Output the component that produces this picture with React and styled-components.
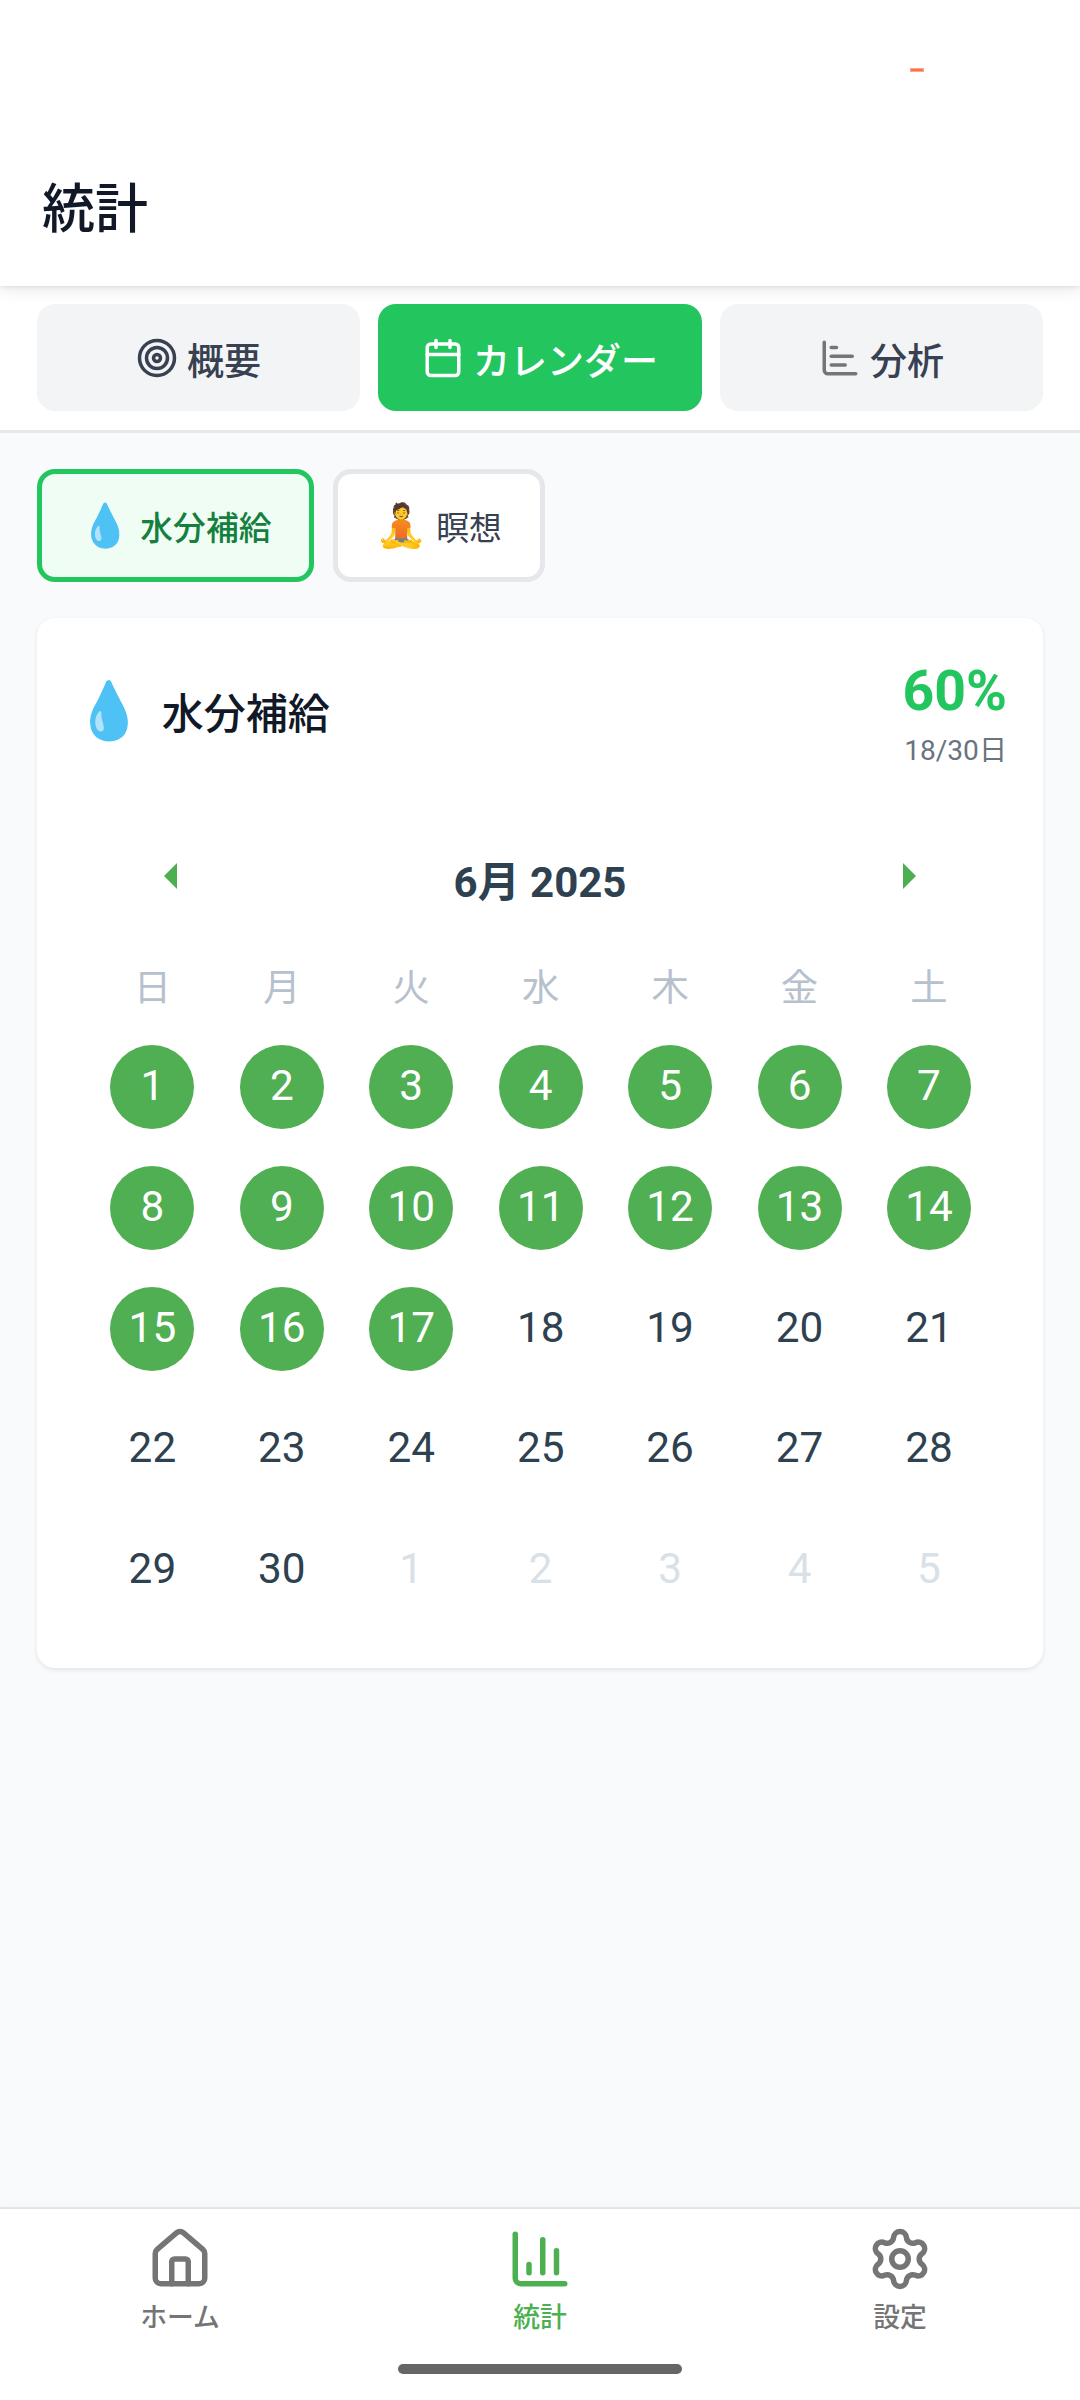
import React from "react";
import styled, { createGlobalStyle } from "styled-components";
import { Target, Calendar, ChartBar, House, ChartColumn, Settings } from "lucide-react";

const GlobalStyle = createGlobalStyle`
  *, *::before, *::after { box-sizing: border-box; }
  body {
    margin: 0;
    background: #f9fafb;
    font-family: Roboto, "Noto Sans CJK JP", sans-serif;
  }
  button { font: inherit; border: 0; margin: 0; padding: 0; background: none; }
`;

const Screen = styled.div`
  width: 1080px;
  height: 2400px;
  display: flex;
  flex-direction: column;
  overflow: hidden;
  background: #f9fafc;
`;

const Header = styled.header`
  position: relative;
  z-index: 1;
  flex: none;
  height: 286px;
  padding: 0 42px;
  display: flex;
  flex-direction: column;
  background: #fff;
  box-shadow: 0 4px 16px rgba(0, 0, 0, 0.09), 0 1px 4px rgba(0, 0, 0, 0.09);
`;

const StatusBar = styled.div`
  height: 132px;
  padding: 68px 114px 0 0;
  display: flex;
  justify-content: flex-end;
`;

const StatusMark = styled.span`
  width: 14px;
  height: 4px;
  background: #ff7043;
  border: 1px solid #ffa588;
`;

const PageTitle = styled.h1`
  margin: 0;
  height: 154px;
  line-height: 156px;
  font-size: 53px;
  font-weight: 500;
  color: #111827;
`;

const TabBar = styled.nav`
  flex: none;
  height: 147px;
  padding: 18px 36.8px 0;
  display: flex;
  align-items: flex-start;
  gap: 18.4px;
  background: #fff;
  border-bottom: 3px solid #e5e7eb;
`;

const Tab = styled.button`
  flex: 1;
  height: 107px;
  display: flex;
  align-items: center;
  justify-content: center;
  gap: 9px;
  border-radius: 18px;
  font-size: 37px;
  font-weight: 500;
  color: ${(p) => (p.$active ? "#fff" : "#374151")};
  background: ${(p) => (p.$active ? "#22c55e" : "#f3f4f6")};
`;

const TabLabel = styled.span`
  padding-top: 2px;
`;

const Content = styled.main`
  flex: 1;
  padding: 36px 37px 0;
  display: flex;
  flex-direction: column;
  gap: 36px;
`;

const Chips = styled.div`
  display: flex;
  gap: 19px;
`;

const Chip = styled.button`
  width: ${(p) => p.$width}px;
  height: 113px;
  padding-left: 37px;
  display: flex;
  align-items: center;
  gap: 9px;
  border: 5px solid ${(p) => (p.$active ? "#22c55e" : "#e5e7eb")};
  border-radius: 18px;
  background: ${(p) => (p.$active ? "#f0fdf4" : "#fff")};
  color: ${(p) => (p.$active ? "#15803d" : "#374151")};
  font-size: 32.8px;
  font-weight: ${(p) => (p.$active ? 500 : 400)};
`;

const Emoji = styled.span`
  font-family: "Noto Color Emoji", sans-serif;
  font-size: ${(p) => p.$size}px;
  font-weight: 400;
  line-height: 1;
`;

const Card = styled.section`
  height: 1050px;
  border-radius: 18px;
  background: #fff;
  box-shadow: 0 2px 5px rgba(0, 0, 0, 0.09);
`;

const CardHeader = styled.div`
  height: 186px;
  padding: 0 36px 0 37px;
  display: flex;
  justify-content: space-between;
`;

const CardTitle = styled.h2`
  margin: 0;
  height: 185px;
  display: flex;
  align-items: center;
  gap: 18px;
  font-size: 42px;
  font-weight: 500;
  color: #111827;
`;

const Score = styled.div`
  padding-top: 40px;
  display: flex;
  flex-direction: column;
  align-items: flex-end;
`;

const Percent = styled.strong`
  font-size: 55.4px;
  font-weight: 700;
  line-height: 68px;
  color: #22c55e;
`;

const Ratio = styled.span`
  font-size: 28.1px;
  line-height: 49px;
  color: #6b7280;
`;

const MonthRow = styled.div`
  height: 130px;
  padding: 18px 127px 0;
  display: flex;
  align-items: center;
  justify-content: space-between;
`;

const MonthLabel = styled.span`
  font-size: 42px;
  font-weight: 700;
  color: #2d4150;
`;

const Arrow = styled.span`
  width: 0;
  height: 0;
  margin-bottom: 4px;
  border-top: 13px solid transparent;
  border-bottom: 13px solid transparent;
  ${(p) => (p.$next ? "border-left" : "border-right")}: 13.5px solid #4caf50;
`;

const Week = styled.div`
  padding: 0 49.3px 0 50.7px;
  display: grid;
  grid-template-columns: repeat(7, 1fr);
  justify-items: center;
  height: ${(p) => p.$height}px;
`;

const Weekday = styled.span`
  font-size: 37.4px;
  line-height: 108px;
  color: #b6c1cd;
`;

const Day = styled.span`
  width: 84px;
  height: 84px;
  border-radius: 50%;
  text-align: center;
  line-height: 82px;
  font-size: 42.3px;
  color: ${(p) => (p.$done ? "#fff" : p.$muted ? "#d9e1e8" : "#2d4150")};
  background: ${(p) => (p.$done ? "#4faf52" : "transparent")};
`;

const BottomNav = styled.nav`
  flex: none;
  height: 193px;
  display: grid;
  grid-template-columns: repeat(3, 1fr);
  grid-template-rows: 155px 10px;
  justify-items: center;
  background: #fff;
  border-top: 2px solid #e4e4e4;
  box-shadow: 0 0 14px rgba(0, 0, 0, 0.03);
`;

const NavItem = styled.button`
  padding-top: 17px;
  display: flex;
  flex-direction: column;
  align-items: center;
  gap: 5px;
  font-size: 26.8px;
  font-weight: 500;
  line-height: 42px;
  color: ${(p) => (p.$active ? "#4caf50" : "#757575")};
`;

const HomeIndicator = styled.span`
  grid-column: 1 / -1;
  width: 284px;
  height: 10px;
  border-radius: 5px;
  background: #666;
`;

const weekdays = ["日", "月", "火", "水", "木", "金", "土"];
const days = Array.from({ length: 35 }, (_, i) => ({
  label: i < 30 ? i + 1 : i - 29,
  done: i < 17,
  muted: i >= 30,
}));
const weeks = [0, 1, 2, 3, 4].map((w) => days.slice(w * 7, w * 7 + 7));

export default function App() {
  return (
    <>
      <GlobalStyle />
      <Screen lang="ja">
        <Header>
          <StatusBar>
            <StatusMark />
          </StatusBar>
          <PageTitle>統計</PageTitle>
        </Header>
        <TabBar>
          <Tab><Target size={42} /><TabLabel>概要</TabLabel></Tab>
          <Tab $active><Calendar size={42} /><TabLabel>カレンダー</TabLabel></Tab>
          <Tab><ChartBar size={42} color="#757575" /><TabLabel>分析</TabLabel></Tab>
        </TabBar>
        <Content>
          <Chips>
            <Chip $active $width={277}><Emoji $size={42}>💧</Emoji>水分補給</Chip>
            <Chip $width={212}><Emoji $size={42}>🧘</Emoji>瞑想</Chip>
          </Chips>
          <Card>
            <CardHeader>
              <CardTitle><Emoji $size={56}>💧</Emoji>水分補給</CardTitle>
              <Score>
                <Percent>60%</Percent>
                <Ratio>18/30日</Ratio>
              </Score>
            </CardHeader>
            <MonthRow>
              <Arrow />
              <MonthLabel>6月 2025</MonthLabel>
              <Arrow $next />
            </MonthRow>
            <Week $height={111}>
              {weekdays.map((d) => <Weekday key={d}>{d}</Weekday>)}
            </Week>
            {weeks.map((week, w) => (
              <Week key={w} $height={120.8}>
                {week.map((d) => (
                  <Day key={d.label} $done={d.done} $muted={d.muted}>{d.label}</Day>
                ))}
              </Week>
            ))}
          </Card>
        </Content>
        <BottomNav>
          <NavItem><House size={66} />ホーム</NavItem>
          <NavItem $active><ChartColumn size={66} />統計</NavItem>
          <NavItem><Settings size={66} />設定</NavItem>
          <HomeIndicator />
        </BottomNav>
      </Screen>
    </>
  );
}
